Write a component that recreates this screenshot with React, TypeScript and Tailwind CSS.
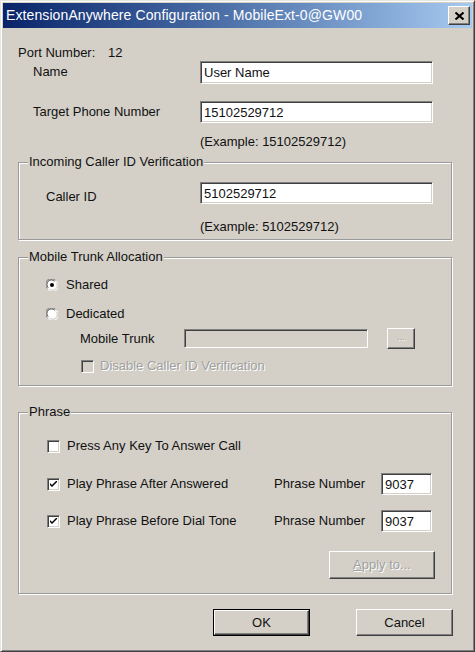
import React from 'react';

const sunken =
  'border border-t-[#808080] border-l-[#808080] border-r-white border-b-white shadow-[inset_1px_1px_#404040,inset_-1px_-1px_#d4d0c8]';
const raised =
  'border border-t-white border-l-white border-r-[#404040] border-b-[#404040] shadow-[inset_-1px_-1px_#808080]';

function TextBox({ value, className, disabled }: { value?: string; className: string; disabled?: boolean }) {
  return (
    <div className={`${sunken} ${disabled ? 'bg-[#d4d0c8]' : 'bg-white'} flex items-center pl-[3px] ${className}`}>
      <span className="leading-none">{value}</span>
    </div>
  );
}

function Button({
  children,
  className,
  isDefault,
  disabled,
}: {
  children: React.ReactNode;
  className: string;
  isDefault?: boolean;
  disabled?: boolean;
}) {
  const inner = (
    <div
      className={`${raised} bg-[#d4d0c8] flex items-center justify-center w-full h-full ${
        disabled ? 'text-[#a0a0a0] [text-shadow:1px_1px_0_#fff]' : ''
      }`}
    >
      {children}
    </div>
  );
  if (isDefault) {
    return <div className={`border border-black ${className}`}>{inner}</div>;
  }
  return <div className={className}>{inner}</div>;
}

function CheckBox({ checked, disabled }: { checked?: boolean; disabled?: boolean }) {
  return (
    <div
      className={`${sunken} w-[13px] h-[13px] shrink-0 flex items-center justify-center ${
        disabled ? 'bg-[#d4d0c8]' : 'bg-white'
      }`}
    >
      {checked && (
        <svg width="7" height="7" viewBox="0 0 7 7">
          <path d="M0 2 L0 4 L2 6 L7 1 L7 -1 L2 4 Z" fill="#000" />
        </svg>
      )}
    </div>
  );
}

function Radio({ checked }: { checked?: boolean }) {
  return (
    <svg width="12" height="12" viewBox="0 0 12 12" className="shrink-0">
      <circle cx="6" cy="6" r="5.5" fill="#fff" />
      <path d="M1.2 9.4 A5.5 5.5 0 0 1 9.4 1.2" stroke="#808080" strokeWidth="1" fill="none" />
      <path d="M2.2 8.7 A4.5 4.5 0 0 1 8.7 2.2" stroke="#404040" strokeWidth="1" fill="none" />
      <path d="M10.8 2.6 A5.5 5.5 0 0 1 2.6 10.8" stroke="#ffffff" strokeWidth="1" fill="none" />
      <path d="M9.8 3.3 A4.5 4.5 0 0 1 3.3 9.8" stroke="#d4d0c8" strokeWidth="1" fill="none" />
      {checked && <circle cx="6" cy="6" r="2" fill="#000" />}
    </svg>
  );
}

function GroupBox({ title, className, children }: { title: string; className?: string; children: React.ReactNode }) {
  return (
    <fieldset
      className={`w-[434px] border border-[#9a9a9a] shadow-[1px_1px_0_#fff,inset_1px_1px_0_#fff] ${className ?? ''}`}
    >
      <legend className="ml-[9px] px-[1px] bg-[#d4d0c8] leading-[16px]">{title}</legend>
      {children}
    </fieldset>
  );
}

export default function App() {
  return (
    <div className="w-[475px] h-[652px] bg-[#d4d0c8] p-[2px] flex flex-col border border-t-[#e8e6e0] border-l-[#e8e6e0] border-r-[#404040] border-b-[#404040] shadow-[inset_1px_1px_#fff,inset_-1px_-1px_#808080] font-['Liberation_Sans',Arial,sans-serif] text-[13px] text-[#111]">
      {/* Title bar */}
      <div className="h-[25px] shrink-0 bg-gradient-to-r from-[#0a246a] to-[#a6caf0] flex items-center justify-between pl-[3px] pr-[2px]">
        <span className="text-white text-[14px] tracking-[0.1px]">ExtensionAnywhere Configuration - MobileExt-0@GW00</span>
        <div className={`${raised} bg-[#d4d0c8] w-[22px] h-[19px] flex items-center justify-center`}>
          <svg width="9" height="8" viewBox="0 0 9 8">
            <path d="M0.5 0.5 L8.5 7.5 M8.5 0.5 L0.5 7.5" stroke="#000" strokeWidth="2" />
          </svg>
        </div>
      </div>

      <div className="flex flex-col pl-[15px]">
        {/* Port */}
        <div className="flex mt-[17px] leading-[16px]">
          <span className="w-[90px]">Port Number:</span>
          <span>12</span>
        </div>

        <div className="flex items-center mt-[0px] pl-[15px] h-[22px]">
          <span className="w-[167px]">Name</span>
          <TextBox value="User Name" className="w-[233px] h-[23px]" />
        </div>

        <div className="flex items-center mt-[18px] pl-[15px] h-[22px]">
          <span className="w-[167px]">Target Phone Number</span>
          <TextBox value="15102529712" className="w-[233px] h-[22px]" />
        </div>

        <div className="mt-[11px] pl-[182px] leading-[16px]">(Example: 15102529712)</div>

        {/* Incoming Caller ID Verification */}
        <GroupBox title="Incoming Caller ID Verification" className="mt-[4px]">
          <div className="flex flex-col pl-[27px] pb-[4px]">
            <div className="flex items-center mt-[12px] h-[22px]">
              <span className="w-[154px] pt-[7px]">Caller ID</span>
              <TextBox value="5102529712" className="w-[233px] h-[22px]" />
            </div>
            <div className="mt-[15px] pl-[154px] leading-[16px]">(Example: 5102529712)</div>
          </div>
        </GroupBox>

        {/* Mobile Trunk Allocation */}
        <GroupBox title="Mobile Trunk Allocation" className="mt-[9px]">
          <div className="flex flex-col pl-[27px] pb-[11px]">
            <div className="flex items-center gap-[8px] mt-[12px] h-[16px]">
              <Radio checked />
              <span>Shared</span>
            </div>
            <div className="flex items-center gap-[8px] mt-[13px] h-[16px]">
              <Radio />
              <span>Dedicated</span>
            </div>
            <div className="flex items-center mt-[6px] h-[21px] pl-[34px]">
              <span className="w-[104px]">Mobile Trunk</span>
              <TextBox disabled className="w-[184px] h-[19px]" />
              <Button className="ml-[19px] w-[28px] h-[21px]" disabled>
                <span className="text-[9px] leading-none pb-[3px]">...</span>
              </Button>
            </div>
            <div className="flex items-center gap-[6px] mt-[9px] h-[16px] pl-[35px]">
              <CheckBox disabled />
              <span className="text-[#a0a0a0] [text-shadow:1px_1px_0_#fff]">Disable Caller ID Verification</span>
            </div>
          </div>
        </GroupBox>

        {/* Phrase */}
        <GroupBox title="Phrase" className="mt-[18px]">
          <div className="flex flex-col pl-[28px] pb-[14px]">
            <div className="flex items-center gap-[7px] mt-[18px] h-[16px]">
              <CheckBox />
              <span>Press Any Key To Answer Call</span>
            </div>
            <div className="flex items-center mt-[19px] h-[22px]">
              <div className="flex items-center gap-[7px] w-[227px]">
                <CheckBox checked />
                <span>Play Phrase After Answered</span>
              </div>
              <span className="w-[107px]">Phrase Number</span>
              <TextBox value="9037" className="w-[51px] h-[22px]" />
            </div>
            <div className="flex items-center mt-[15px] h-[22px]">
              <div className="flex items-center gap-[7px] w-[227px]">
                <CheckBox checked />
                <span>Play Phrase Before Dial Tone</span>
              </div>
              <span className="w-[107px]">Phrase Number</span>
              <TextBox value="9037" className="w-[51px] h-[22px]" />
            </div>
            <div className="flex justify-end pr-[16px] mt-[19px]">
              <Button className="w-[106px] h-[28px]" disabled>
                <span>
                  <span className="underline">A</span>pply to...
                </span>
              </Button>
            </div>
          </div>
        </GroupBox>

        {/* OK / Cancel */}
        <div className="flex justify-end gap-[46px] pr-[19px] mt-[15px]">
          <Button className="w-[97px] h-[27px]" isDefault>
            OK
          </Button>
          <Button className="w-[97px] h-[27px]">Cancel</Button>
        </div>
      </div>
    </div>
  );
}
